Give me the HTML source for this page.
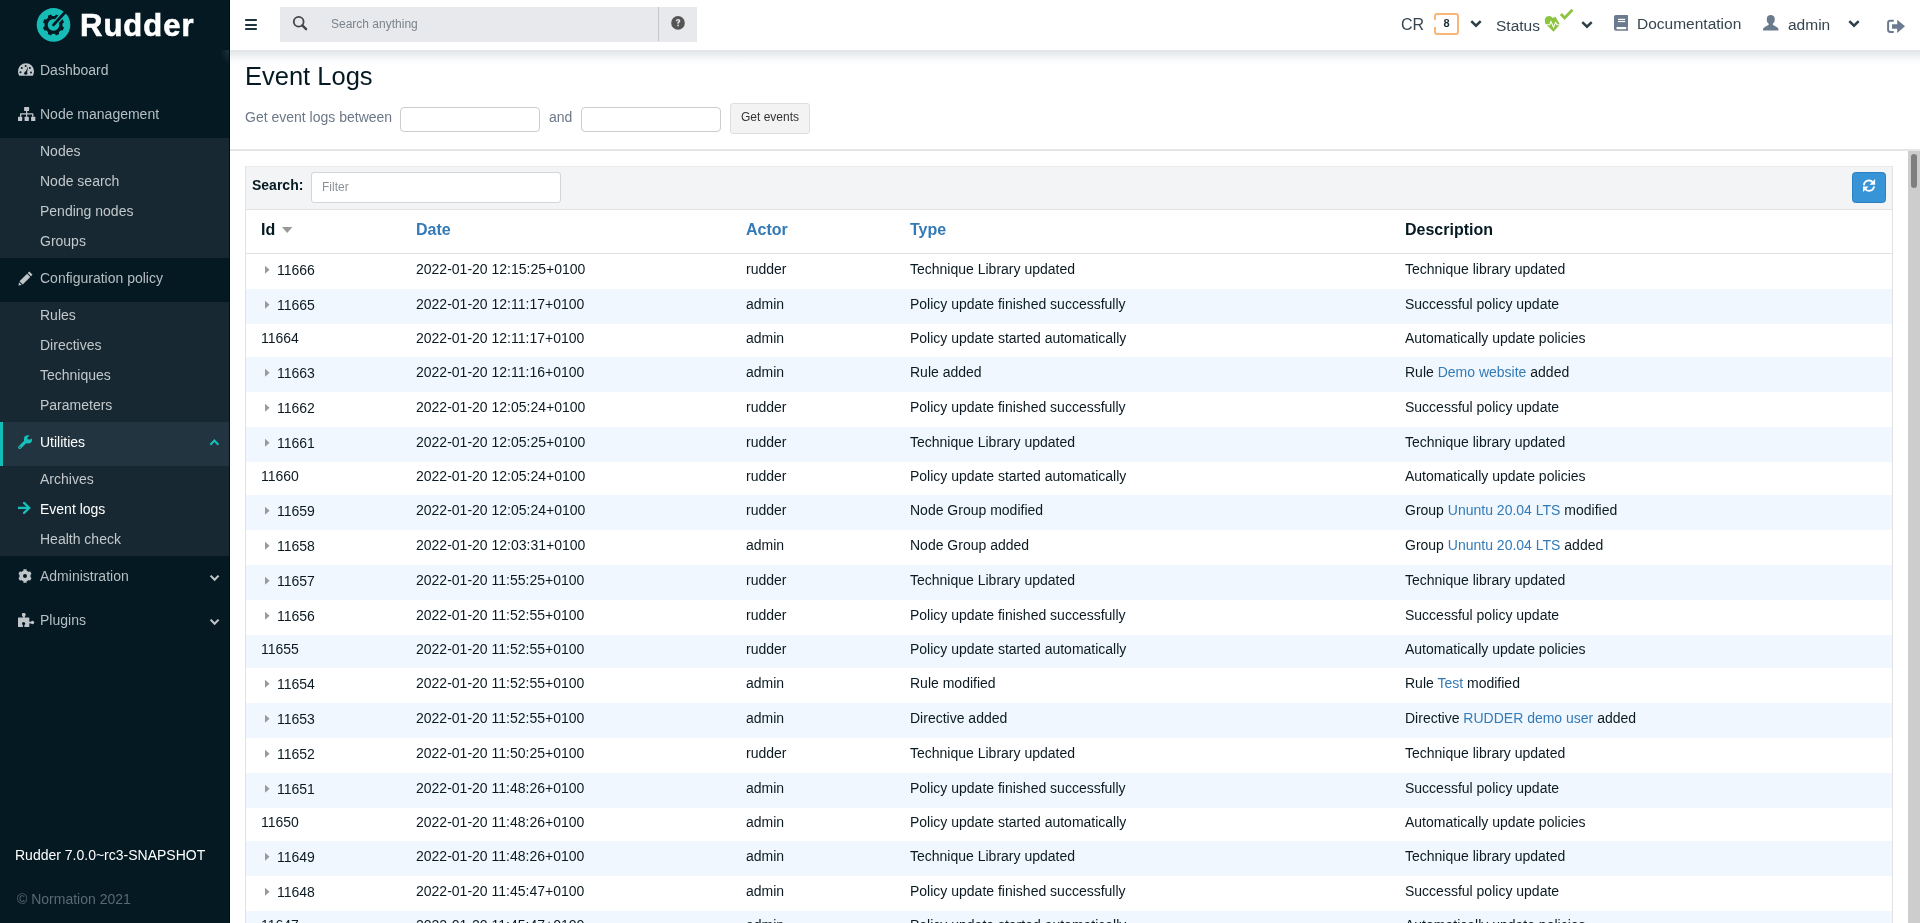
<!DOCTYPE html>
<html><head><meta charset="utf-8">
<style>
*{box-sizing:border-box;margin:0;padding:0}
html,body{width:1920px;height:923px;overflow:hidden;background:#fff;font-family:"Liberation Sans",sans-serif;font-size:14px;color:#041922}
a{color:#337ab7;text-decoration:none}
.gl{will-change:transform}
#sb{position:absolute;left:0;top:0;width:230px;height:923px;background:#041922}
#logo{position:absolute;left:0;top:0;width:230px;height:50px}
#logo .txt{position:absolute;left:80px;top:6px;font-size:31px;font-weight:bold;color:#fff;line-height:40px;-webkit-text-stroke:0.6px #fff;letter-spacing:1px}
.mi{position:absolute;left:0;width:230px;height:44px;color:#b8bfc3;font-size:14px;line-height:20px;padding-top:10px;padding-left:40px}
.mi svg{position:absolute;left:17px;top:13px}
.sub{position:absolute;left:0;width:230px;background:#172832}
.si{height:30px;line-height:20px;padding-top:3px;padding-left:40px;color:#c2c8cb;font-size:14px;position:relative}
.si.act{color:#fff}
.mi svg.chev{position:absolute;left:209px;top:15px}
#ver{position:absolute;left:15px;top:845px;color:#fff;font-size:14px;line-height:20px}
#copy{position:absolute;left:17px;top:889px;color:#5a6a73;font-size:14px;line-height:20px}

#tb{position:absolute;left:230px;top:0;width:1690px;height:50px;background:#fff;z-index:5}
#tbs{position:absolute;left:230px;top:50px;width:1690px;height:15px;z-index:6;background:linear-gradient(rgba(20,50,75,.13),rgba(20,50,75,.075) 35%,rgba(20,50,75,.025) 70%,rgba(20,50,75,0))}
#srch{position:absolute;left:50px;top:7px;width:417px;height:35px;background:#e8e9ec}
#srch .ph{position:absolute;left:51px;top:8px;color:#7b848c;font-size:12px;line-height:18px}
#srch .div{position:absolute;left:378px;top:0;width:1px;height:34px;background:#c6c7ca}
.tbt{position:absolute;top:15px;font-size:15.5px;line-height:20px;color:#36454f}
.ic{position:absolute}

#hdr{position:absolute;left:230px;top:50px;width:1690px;height:100px;background:#fff}
#hline{position:absolute;left:230px;top:149px;width:1690px;height:2px;background:rgba(0,0,0,.1)}
#hdr h1{position:absolute;left:15px;top:9.5px;font-size:25.5px;font-weight:normal;line-height:32px;color:#041922}
#hdr .lbl{position:absolute;top:57px;font-size:14px;line-height:20px;color:#6c7888}
#hdr .inp{position:absolute;top:57px;width:140px;height:25px;border:1px solid #cdcdcd;border-radius:4px;background:#fff}
#hdr .btn{position:absolute;left:500px;top:53px;width:80px;height:31px;border:1px solid #dedede;border-radius:3px;background:#f3f3f3;font-size:12px;line-height:16px;padding-top:5px;text-align:center;color:#333}

#pnl{position:absolute;left:245px;top:166px;width:1648px;height:800px;border:1px solid #e2e2e2;border-top-color:#ebebeb;background:#fff}
#tool{position:absolute;left:0;top:0;width:1646px;height:43px;background:#f3f4f6;border-bottom:1px solid #e2e2e2}
#tool .lab{position:absolute;left:6px;top:8px;font-weight:bold;font-size:14px;line-height:20px;color:#041922}
#tool .flt{position:absolute;left:65px;top:5px;width:250px;height:31px;border:1px solid #d4d4d4;border-radius:3px;background:#fff}
#tool .flt span{position:absolute;left:10px;top:5px;color:#8a9196;font-size:12px;line-height:18px}
#refresh{position:absolute;left:1606px;top:5px;width:34px;height:31px;background:#3694d7;border:1px solid #2c80c0;border-radius:3.5px}
#thead{position:absolute;left:0;top:43px;width:1646px;height:44px;border-bottom:1px solid #e2e2e2;background:#fff}
.th{position:absolute;top:10px;font-weight:bold;font-size:16px;line-height:20px;color:#337ab7}
#rows{position:absolute;left:0;top:87px;width:1646px}
.tr{position:relative;width:1646px;height:33px;background:#fff}
.tr.c{height:35px}
.tr.s{background:#f0f7fe}
.td{position:absolute;top:0;line-height:20px;font-size:14px;color:#0b1a22;white-space:nowrap}
.tr.n .td{top:4px}
.tr.c .td{top:5px}
.c1{left:15px}.c2{left:170px}.c3{left:500px}.c4{left:664px}.c5{left:1159px}
.tr.c .c1{left:31px;top:6px}
.caret{position:absolute;left:-13px;top:4.8px;width:6px;height:9px}
#sbar{position:absolute;left:1908px;top:151px;width:12px;height:772px;background:#cdcdcd}
#sbar div{position:absolute;left:3px;top:3px;width:6px;height:34px;border-radius:3px;background:#7f7f7f}
</style></head>
<body>
<div id="sb" class="gl">
  <div id="logo">
    <svg class="ic" style="left:36px;top:7px" width="35" height="36" viewBox="0 0 35 36">
      <circle cx="17.5" cy="17.9" r="16.8" fill="#17bcb7"/>
      <path fill="#041922" d="M26.50 17.90 L26.40 19.23 L28.00 20.42 L26.71 23.54 L24.73 23.25 L23.86 24.26 L22.85 25.13 L23.14 27.11 L20.02 28.40 L18.83 26.80 L17.50 26.90 L16.17 26.80 L14.98 28.40 L11.86 27.11 L12.15 25.13 L11.14 24.26 L10.27 23.25 L8.29 23.54 L7.00 20.42 L8.60 19.23 L8.50 17.90 L8.60 16.57 L7.00 15.38 L8.29 12.26 L10.27 12.55 L11.14 11.54 L12.15 10.67 L11.86 8.69 L14.98 7.40 L16.17 9.00 L17.50 8.90 L18.83 9.00 L20.02 7.40 L23.14 8.69 L22.85 10.67 L23.86 11.54 L24.73 12.55 L26.71 12.26 L28.00 15.38 L26.40 16.57Z"/>
      <circle cx="17.5" cy="17.9" r="5.8" fill="#17bcb7"/>
      <path d="M17.5 17.9 L26.4 8.2" stroke="#17bcb7" stroke-width="5.4"/>
      <path d="M17.5 17.9 L28.9 5.5" stroke="#041922" stroke-width="2.8" stroke-linecap="round"/>
    </svg>
    <div class="txt">Rudder</div>
  </div>

  <div class="mi" style="top:50px">
    <svg width="16" height="13" viewBox="0 0 16 13" style="left:18px;top:13px"><path d="M8 0.2A8 8 0 0 0 0 8.2c0 1.7.4 3.2 1.2 4.5h13.6c.8-1.3 1.2-2.8 1.2-4.5A8 8 0 0 0 8 .2z" fill="#c0c5c9"/><g fill="#041922"><circle cx="3.8" cy="5" r="1"/><circle cx="2.5" cy="9.3" r="1"/><circle cx="11.9" cy="5.1" r="1"/><circle cx="13" cy="9.4" r="1"/><circle cx="7.7" cy="2.9" r="1"/><path d="M10.3 3.3 L8.8 10.4 L6.9 10 Z"/><circle cx="7.8" cy="10.2" r="1.6"/></g></svg>
    Dashboard</div>
  <div class="mi" style="top:94px">
    <svg width="18" height="14" viewBox="0 0 18 14" style="left:18px;top:13px"><g fill="#c0c5c9"><rect x="6.1" y="0" width="5" height="3.9" rx=".5"/><rect x="8" y="3.9" width="1.2" height="3"/><path d="M2.6 6.2h12.1c.4 0 .7.3.7.7v2.9h-1.3V7.5H3.3v2.3H2V6.9c0-.4.3-.7.6-.7z"/><rect x="8" y="6.9" width="1.2" height="2.9"/><rect x="0" y="9.8" width="4.2" height="4.2" rx=".5"/><rect x="6.6" y="9.8" width="4.2" height="4.2" rx=".5"/><rect x="13.1" y="9.8" width="4.2" height="4.2" rx=".5"/></g></svg>
    Node management</div>
  <div class="sub" style="top:138px;height:120px">
    <div class="si">Nodes</div><div class="si">Node search</div><div class="si">Pending nodes</div><div class="si">Groups</div>
  </div>
  <div class="mi" style="top:258px">
    <svg width="15" height="15" viewBox="0 0 15 15" style="top:13px;left:18px"><path d="M11.3 0.5l3.2 3.2-1.6 1.6-3.2-3.2zM9.1 2.7l3.2 3.2-7.6 7.6-3.2-3.2zM1 11.3l2.7 2.7-3.2.5z" fill="#c0c5c9"/></svg>
    Configuration policy</div>
  <div class="sub" style="top:302px;height:120px">
    <div class="si">Rules</div><div class="si">Directives</div><div class="si">Techniques</div><div class="si">Parameters</div>
  </div>
  <div class="mi" style="top:422px;background:#22343f;color:#fff">
    <div style="position:absolute;left:0;top:0;width:3px;height:44px;background:#13beb7"></div>
    <svg width="15" height="15" viewBox="0 0 15 15" style="top:13px;left:18px"><path d="M1.8 12.4 L8 6.2" stroke="#17c0ba" stroke-width="3.2" stroke-linecap="round"/><circle cx="10" cy="4.4" r="4.1" fill="#17c0ba"/><g fill="#22343f"><circle cx="11" cy="3" r="1.6"/><path d="M10 2.2 L12.3 -0.3 L15.2 2.6 L12.2 4.6z"/><circle cx="2" cy="12.2" r=".6"/></g></svg>
    Utilities
    <svg class="chev" width="11" height="8" viewBox="0 0 11 8" style="top:17px"><path d="M1.4 5.8L5.4 1.6l4 4.2" stroke="#13beb7" stroke-width="2.1" fill="none"/></svg>
  </div>
  <div class="sub" style="top:466px;height:90px">
    <div class="si">Archives</div>
    <div class="si act"><svg width="14" height="13" viewBox="0 0 14 13" style="position:absolute;left:18px;top:6px"><path d="M0 5.9h11" stroke="#17c0ba" stroke-width="2.3"/><path d="M6.1 0.9L11.2 5.9 6.1 10.9" stroke="#17c0ba" stroke-width="2.3" fill="none" stroke-linecap="round"/></svg>Event logs</div>
    <div class="si">Health check</div>
  </div>
  <div class="mi" style="top:556px">
    <svg width="14" height="14" viewBox="0 0 14 14" style="top:13px;left:18px"><path fill="#c0c5c9" fill-rule="evenodd" d="M4.20 2.15 L5.36 1.64 L5.45 0.28 L8.55 0.28 L8.64 1.64 L9.80 2.15 L10.82 2.90 L12.05 2.29 L13.60 4.98 L12.46 5.74 L12.60 7.00 L12.46 8.26 L13.60 9.02 L12.05 11.71 L10.82 11.10 L9.80 11.85 L8.64 12.36 L8.55 13.72 L5.45 13.72 L5.36 12.36 L4.20 11.85 L3.18 11.10 L1.95 11.71 L0.40 9.02 L1.54 8.26 L1.40 7.00 L1.54 5.74 L0.40 4.98 L1.95 2.29 L3.18 2.90Z M7 5 A2 2 0 1 0 7 9 A2 2 0 1 0 7 5Z"/></svg>
    Administration
    <svg class="chev" width="11" height="8" viewBox="0 0 11 8" style="top:18px"><path d="M1.6 1.6L5.6 5.8l4-4.2" stroke="#c0c5c9" stroke-width="2.1" fill="none"/></svg>
  </div>
  <div class="mi" style="top:600px">
    <svg width="17" height="15" viewBox="0 0 17 15" style="top:12.7px;left:18px"><g fill="#c0c5c9"><rect x="0" y="4.4" width="11.3" height="9.6" rx=".4"/><circle cx="5.75" cy="1.75" r="1.95"/><rect x="4.8" y="2.5" width="2" height="2.2"/><circle cx="14.5" cy="9.5" r="1.7"/><rect x="10.5" y="8.7" width="3" height="1.7"/></g><g fill="#041922"><circle cx="5.6" cy="10.5" r="1.6"/><rect x="4.9" y="10.5" width="1.5" height="3.6"/></g></svg>
    Plugins
    <svg class="chev" width="11" height="8" viewBox="0 0 11 8" style="top:18px"><path d="M1.6 1.6L5.6 5.8l4-4.2" stroke="#c0c5c9" stroke-width="2.1" fill="none"/></svg>
  </div>
  <div style="position:absolute;left:229px;top:0;width:1px;height:923px;background:#020f16"></div>
  <div style="position:absolute;left:221px;top:50px;width:8px;height:13px;background:radial-gradient(ellipse at 100% 0%,rgba(70,90,100,.38),rgba(70,90,100,0) 80%)"></div>
  <div id="ver">Rudder 7.0.0~rc3-SNAPSHOT</div>
  <div id="copy">© Normation 2021</div>
</div>

<div id="tb" class="gl">
  <svg class="ic" style="left:15px;top:18px" width="12" height="13" viewBox="0 0 12 13"><g fill="#1e343f"><rect x="0" y="1" width="12" height="2" rx=".8"/><rect x="0" y="5.9" width="12" height="2" rx=".8"/><rect x="0" y="10" width="12" height="2" rx=".8"/></g></svg>
  <div id="srch">
    <svg class="ic" style="left:12px;top:8px" width="16" height="16" viewBox="0 0 16 16"><circle cx="6.7" cy="6.75" r="4.9" stroke="#444" stroke-width="1.8" fill="none"/><path d="M10.3 10.4l3.8 3.8" stroke="#444" stroke-width="2.4" stroke-linecap="round"/></svg>
    <div class="ph">Search anything</div>
    <div class="div"></div>
    <svg class="ic" style="left:391px;top:9px" width="14" height="14" viewBox="0 0 14 14"><circle cx="7" cy="6.9" r="6.8" fill="#555"/><path d="M4.9 5.2c0-1.3 1-2.2 2.2-2.2 1.3 0 2.2.8 2.2 1.9 0 1.5-1.6 1.5-1.6 2.6v.3H6.3v-.5c0-1.5 1.4-1.6 1.4-2.3 0-.4-.3-.7-.7-.7-.4 0-.7.3-.8.9z" fill="#e8e9ec"/><rect x="6.3" y="8.6" width="1.5" height="1.6" fill="#e8e9ec"/></svg>
  </div>
  <div class="tbt" style="left:1171px;top:15px;font-size:16px">CR</div>
  <div style="position:absolute;left:1204px;top:13px;width:25px;height:22px;border:2px solid #f7b877;border-radius:3px;font-size:11px;font-weight:bold;text-align:center;line-height:17px;color:#1c2a33">8</div>
  <div style="position:absolute;left:1203px;top:20px;width:4px;height:7px;background:#fff"></div>
  <svg class="ic" style="left:1240px;top:19px" width="12" height="10" viewBox="0 0 12 10"><path d="M1.3 2.2L6 6.7l4.7-4.5" stroke="#2c3e48" stroke-width="2.5" fill="none"/></svg>
  <div class="tbt" style="left:1266px;top:15.5px">Status</div>
  <svg class="ic" style="left:1310px;top:6px" width="40" height="30" viewBox="0 0 40 30">
    <path d="M4.8 14.3 A4.3 4.3 0 0 1 12.6 11.9 L15.5 10.8 L19.9 18.4 L13.5 25.8 L6.2 18.6 C5.2 17.5 4.8 16 4.8 14.3Z" fill="#8cc43f"/>
    <path d="M3.5 18.8 L9.6 18.8 L11 15.6 L13.5 21.2 L15.6 16.4 L17 18.8 L21.5 18.8" stroke="#fff" stroke-width="1.1" fill="none"/>
    <path d="M20.9 8 L24.6 11.9 L32.5 3.8" stroke="#8cc43f" stroke-width="2.8" fill="none"/>
  </svg>
  <svg class="ic" style="left:1351px;top:20px" width="12" height="10" viewBox="0 0 12 10"><path d="M1.3 2.2L6 6.7l4.7-4.5" stroke="#2c3e48" stroke-width="2.5" fill="none"/></svg>
  <svg class="ic" style="left:1384px;top:15px" width="14" height="16" viewBox="0 0 14 16"><path d="M1.8 0h11.2c.6 0 1 .4 1 1v11.3l-.6.6.6.6V15.7H2C.9 15.7 0 14.8 0 13.7V2C0 .9.8 0 1.8 0z" fill="#6b7b8f"/><rect x="4" y="3.8" width="7.2" height="1.2" fill="#fff"/><rect x="4" y="5.9" width="7.2" height="1.2" fill="#fff"/><rect x="2.5" y="11.9" width="9.7" height="2.3" rx=".6" fill="#fff"/></svg>
  <div class="tbt" style="left:1407px;top:14px">Documentation</div>
  <svg class="ic" style="left:1533px;top:15px" width="16" height="16" viewBox="0 0 16 16"><path d="M7.8 0.1c2.2 0 3.9 1.4 3.9 3.6v1.6c0 1.5-.8 2.8-1.9 3.4v1.1l4.6 2.6c.6.4 1 1 1 1.6v1.4H.1v-1.4c0-.6.4-1.2 1-1.6l4.6-2.6V8.7C4.6 8.1 3.8 6.8 3.8 5.3V3.7C3.8 1.5 5.5.1 7.8.1z" fill="#6b7b8f"/></svg>
  <div class="tbt" style="left:1558px;top:15px">admin</div>
  <svg class="ic" style="left:1618px;top:19px" width="12" height="10" viewBox="0 0 12 10"><path d="M1.3 2.2L6 6.7l4.7-4.5" stroke="#2c3e48" stroke-width="2.5" fill="none"/></svg>
  <svg class="ic" style="left:1650px;top:12px" width="32" height="28" viewBox="0 0 32 28"><path d="M13.8 8.7 H10.2 Q8.1 8.7 8.1 10.8 V17.8 Q8.1 19.9 10.2 19.9 H13.8" stroke="#6b7a90" stroke-width="2" fill="none"/><path d="M12 12.3 H17.2 V7.7 L25 14.3 L17.2 20.9 V16.7 H12Z" fill="#6b7a90"/></svg>
</div>

<div id="tbs"></div>
<div id="hdr" class="gl">
  <h1>Event Logs</h1>
  <div class="lbl" style="left:15px">Get event logs between</div>
  <div class="inp" style="left:170px"></div>
  <div class="lbl" style="left:319px">and</div>
  <div class="inp" style="left:351px"></div>
  <div class="btn">Get events</div>
</div>

<div id="hline"></div>
<div id="pnl" class="gl">
  <div id="tool">
    <div class="lab">Search:</div>
    <div class="flt"><span>Filter</span></div>
    <div id="refresh"><svg class="ic" style="left:9px;top:5px" width="15" height="15" viewBox="0 0 15 15"><path d="M1.9 7.4A5.1 5.1 0 0 1 11.3 4.9" stroke="#fff" stroke-width="1.8" fill="none"/><path d="M13.1 1.1V6.7H7.5z" fill="#fff"/><path d="M12.1 8.4A5.1 5.1 0 0 1 2.8 10.6" stroke="#fff" stroke-width="1.8" fill="none"/><path d="M1 14V8.4H6.6z" fill="#fff"/></svg></div>
  </div>
  <div id="thead">
    <div class="th" style="left:15px;color:#041922">Id <svg width="11" height="6" viewBox="0 0 11 6" style="position:relative;top:-2px;left:2px"><path d="M0 0h10.4L5.2 6z" fill="#999"/></svg></div>
    <div class="th" style="left:170px">Date</div>
    <div class="th" style="left:500px">Actor</div>
    <div class="th" style="left:664px">Type</div>
    <div class="th" style="left:1159px;color:#041922">Description</div>
  </div>
  <div id="rows">
<div class="tr c"><div class="td c1"><svg class="caret" viewBox="0 0 6 9"><path d="M1 0.8L5.5 4.8 1 8.8z" fill="#999"/></svg>11666</div><div class="td c2">2022-01-20 12:15:25+0100</div><div class="td c3">rudder</div><div class="td c4">Technique Library updated</div><div class="td c5">Technique library updated</div></div>
<div class="tr c s"><div class="td c1"><svg class="caret" viewBox="0 0 6 9"><path d="M1 0.8L5.5 4.8 1 8.8z" fill="#999"/></svg>11665</div><div class="td c2">2022-01-20 12:11:17+0100</div><div class="td c3">admin</div><div class="td c4">Policy update finished successfully</div><div class="td c5">Successful policy update</div></div>
<div class="tr n"><div class="td c1">11664</div><div class="td c2">2022-01-20 12:11:17+0100</div><div class="td c3">admin</div><div class="td c4">Policy update started automatically</div><div class="td c5">Automatically update policies</div></div>
<div class="tr c s"><div class="td c1"><svg class="caret" viewBox="0 0 6 9"><path d="M1 0.8L5.5 4.8 1 8.8z" fill="#999"/></svg>11663</div><div class="td c2">2022-01-20 12:11:16+0100</div><div class="td c3">admin</div><div class="td c4">Rule added</div><div class="td c5">Rule <a>Demo website</a> added</div></div>
<div class="tr c"><div class="td c1"><svg class="caret" viewBox="0 0 6 9"><path d="M1 0.8L5.5 4.8 1 8.8z" fill="#999"/></svg>11662</div><div class="td c2">2022-01-20 12:05:24+0100</div><div class="td c3">rudder</div><div class="td c4">Policy update finished successfully</div><div class="td c5">Successful policy update</div></div>
<div class="tr c s"><div class="td c1"><svg class="caret" viewBox="0 0 6 9"><path d="M1 0.8L5.5 4.8 1 8.8z" fill="#999"/></svg>11661</div><div class="td c2">2022-01-20 12:05:25+0100</div><div class="td c3">rudder</div><div class="td c4">Technique Library updated</div><div class="td c5">Technique library updated</div></div>
<div class="tr n"><div class="td c1">11660</div><div class="td c2">2022-01-20 12:05:24+0100</div><div class="td c3">rudder</div><div class="td c4">Policy update started automatically</div><div class="td c5">Automatically update policies</div></div>
<div class="tr c s"><div class="td c1"><svg class="caret" viewBox="0 0 6 9"><path d="M1 0.8L5.5 4.8 1 8.8z" fill="#999"/></svg>11659</div><div class="td c2">2022-01-20 12:05:24+0100</div><div class="td c3">rudder</div><div class="td c4">Node Group modified</div><div class="td c5">Group <a>Ununtu 20.04 LTS</a> modified</div></div>
<div class="tr c"><div class="td c1"><svg class="caret" viewBox="0 0 6 9"><path d="M1 0.8L5.5 4.8 1 8.8z" fill="#999"/></svg>11658</div><div class="td c2">2022-01-20 12:03:31+0100</div><div class="td c3">admin</div><div class="td c4">Node Group added</div><div class="td c5">Group <a>Ununtu 20.04 LTS</a> added</div></div>
<div class="tr c s"><div class="td c1"><svg class="caret" viewBox="0 0 6 9"><path d="M1 0.8L5.5 4.8 1 8.8z" fill="#999"/></svg>11657</div><div class="td c2">2022-01-20 11:55:25+0100</div><div class="td c3">rudder</div><div class="td c4">Technique Library updated</div><div class="td c5">Technique library updated</div></div>
<div class="tr c"><div class="td c1"><svg class="caret" viewBox="0 0 6 9"><path d="M1 0.8L5.5 4.8 1 8.8z" fill="#999"/></svg>11656</div><div class="td c2">2022-01-20 11:52:55+0100</div><div class="td c3">rudder</div><div class="td c4">Policy update finished successfully</div><div class="td c5">Successful policy update</div></div>
<div class="tr n s"><div class="td c1">11655</div><div class="td c2">2022-01-20 11:52:55+0100</div><div class="td c3">rudder</div><div class="td c4">Policy update started automatically</div><div class="td c5">Automatically update policies</div></div>
<div class="tr c"><div class="td c1"><svg class="caret" viewBox="0 0 6 9"><path d="M1 0.8L5.5 4.8 1 8.8z" fill="#999"/></svg>11654</div><div class="td c2">2022-01-20 11:52:55+0100</div><div class="td c3">admin</div><div class="td c4">Rule modified</div><div class="td c5">Rule <a>Test</a> modified</div></div>
<div class="tr c s"><div class="td c1"><svg class="caret" viewBox="0 0 6 9"><path d="M1 0.8L5.5 4.8 1 8.8z" fill="#999"/></svg>11653</div><div class="td c2">2022-01-20 11:52:55+0100</div><div class="td c3">admin</div><div class="td c4">Directive added</div><div class="td c5">Directive <a>RUDDER demo user</a> added</div></div>
<div class="tr c"><div class="td c1"><svg class="caret" viewBox="0 0 6 9"><path d="M1 0.8L5.5 4.8 1 8.8z" fill="#999"/></svg>11652</div><div class="td c2">2022-01-20 11:50:25+0100</div><div class="td c3">rudder</div><div class="td c4">Technique Library updated</div><div class="td c5">Technique library updated</div></div>
<div class="tr c s"><div class="td c1"><svg class="caret" viewBox="0 0 6 9"><path d="M1 0.8L5.5 4.8 1 8.8z" fill="#999"/></svg>11651</div><div class="td c2">2022-01-20 11:48:26+0100</div><div class="td c3">admin</div><div class="td c4">Policy update finished successfully</div><div class="td c5">Successful policy update</div></div>
<div class="tr n"><div class="td c1">11650</div><div class="td c2">2022-01-20 11:48:26+0100</div><div class="td c3">admin</div><div class="td c4">Policy update started automatically</div><div class="td c5">Automatically update policies</div></div>
<div class="tr c s"><div class="td c1"><svg class="caret" viewBox="0 0 6 9"><path d="M1 0.8L5.5 4.8 1 8.8z" fill="#999"/></svg>11649</div><div class="td c2">2022-01-20 11:48:26+0100</div><div class="td c3">admin</div><div class="td c4">Technique Library updated</div><div class="td c5">Technique library updated</div></div>
<div class="tr c"><div class="td c1"><svg class="caret" viewBox="0 0 6 9"><path d="M1 0.8L5.5 4.8 1 8.8z" fill="#999"/></svg>11648</div><div class="td c2">2022-01-20 11:45:47+0100</div><div class="td c3">admin</div><div class="td c4">Policy update finished successfully</div><div class="td c5">Successful policy update</div></div>
<div class="tr n s"><div class="td c1">11647</div><div class="td c2">2022-01-20 11:45:47+0100</div><div class="td c3">admin</div><div class="td c4">Policy update started automatically</div><div class="td c5">Automatically update policies</div></div>
  </div>
</div>
<div id="sbar"><div></div></div>
</body></html>
